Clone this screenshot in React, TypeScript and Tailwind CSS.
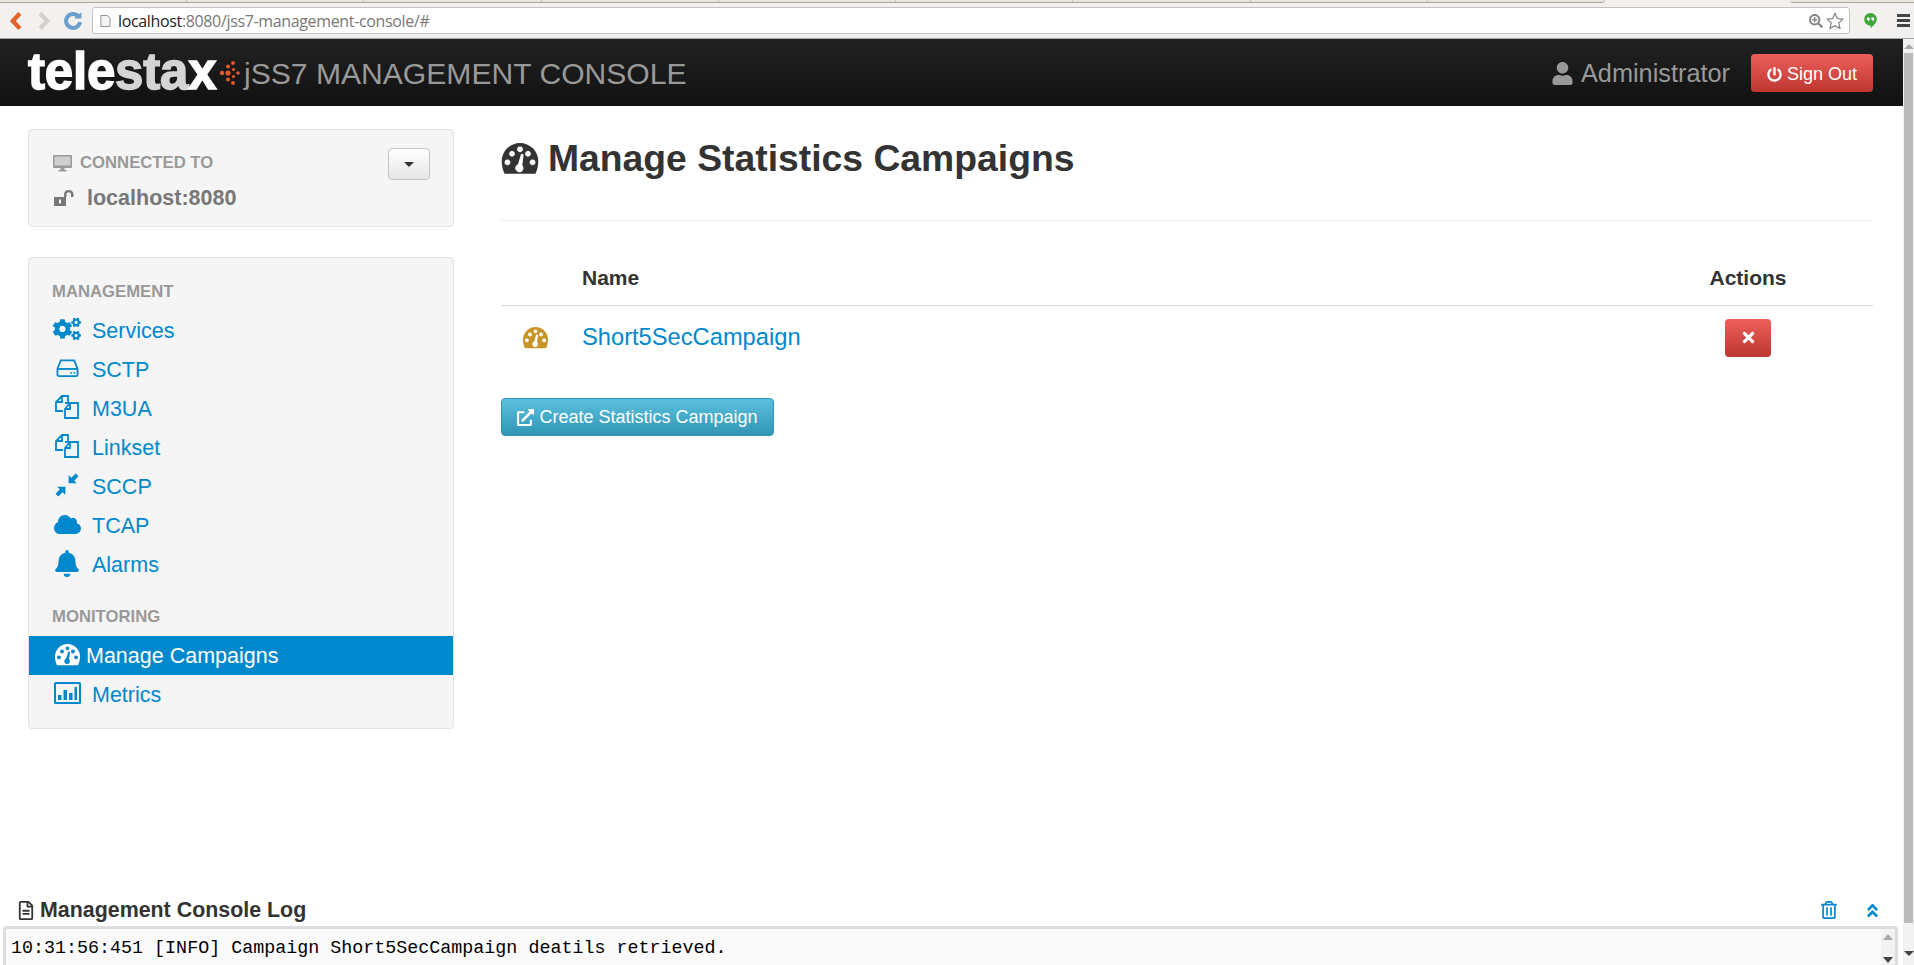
import { FaAngleDoubleUp, FaBell, FaCloud, FaCogs, FaExternalLinkAlt, FaPowerOff, FaRegFileAlt, FaRegTrashAlt, FaSearchPlus, FaTimes, FaUser } from 'react-icons/fa';

const Gauge = ({ className }: { className: string }) => (
  <svg viewBox="0 0 32 28" className={className} fill="currentColor">
    <path
      fillRule="evenodd"
      d="M2.5 27C1 24 0 20 0 16A16 16 0 0 1 32 16C32 20 31 24 29.5 27ZM5 14.5a2.5 2.5 0 1 0 .01 0ZM9 7a2.5 2.5 0 1 0 .01 0ZM16 3a2.5 2.5 0 1 0 .01 0ZM23 7a2.5 2.5 0 1 0 .01 0ZM27 14.5a2.5 2.5 0 1 0 .01 0ZM14.2 18.6L17 9.5L19.2 10L18 19.4A3.6 3.6 0 1 1 14.2 18.6Z"
    />
  </svg>
);

const Copy = () => (
  <svg viewBox="0 0 26 26" className="w-[26px] h-[26px]" fill="none" stroke="currentColor" strokeWidth="1.8">
    <path d="M9 17H2V8L8 2H14V8" />
    <path d="M8 2V8H2" />
    <path d="M11 9H24V24H11V15L16 9Z" fill="#f5f5f5" />
    <path d="M16 9V15H11" />
  </svg>
);

const Hdd = () => (
  <svg viewBox="0 0 24 20" className="w-[23px] h-[20px]" fill="none" stroke="currentColor" strokeWidth="1.9">
    <path d="M1.5 11L5 2H19L22.5 11V17A1.5 1.5 0 0 1 21 18.5H3A1.5 1.5 0 0 1 1.5 17Z" />
    <path d="M1.5 11H22.5" />
    <path d="M15 15H16.5M18.5 15H20" />
  </svg>
);

const Compress = () => (
  <svg viewBox="0 0 22 22" className="w-[24px] h-[24px]" fill="currentColor">
    <path d="M12.5 2V9.5H20L17.6 7L21.5 3L19 .5L15 4.4Z" />
    <path d="M9.5 20V12.5H2L4.4 15L.5 19L3 21.5L7 17.6Z" />
  </svg>
);

const Metrics = () => (
  <svg viewBox="0 0 27 22" className="w-[27px] h-[22px]" fill="currentColor">
    <path
      fillRule="evenodd"
      d="M1.5 0H25.5A1.5 1.5 0 0 1 27 1.5V20.5A1.5 1.5 0 0 1 25.5 22H1.5A1.5 1.5 0 0 1 0 20.5V1.5A1.5 1.5 0 0 1 1.5 0ZM2 2V20H25V2Z"
    />
    <path d="M4 13H7.5V18H4ZM9.5 8H13V18H9.5ZM15 11H18.5V18H15ZM20.5 5H23V18H20.5Z" />
  </svg>
);

const Desktop = () => (
  <svg viewBox="0 0 19 17" className="w-[19px] h-[17px]">
    <path d="M1 0H18A1 1 0 0 1 19 1V12A1 1 0 0 1 18 13H1A1 1 0 0 1 0 12V1A1 1 0 0 1 1 0Z" fill="#999" />
    <path d="M1.5 1.5H17.5V10.5H1.5Z" fill="#cfcfcf" />
    <path d="M7.5 13H11.5V15H13.5V16.5H5.5V15H7.5Z" fill="#999" />
  </svg>
);

const OpenLock = () => (
  <svg viewBox="0 0 21 18" className="w-[21px] h-[18px]" fill="#777">
    <path
      fillRule="evenodd"
      d="M1 8H13V17H1ZM6 10.5V14.5H8V10.5Z"
    />
    <path d="M11 8V5A4.8 4.8 0 0 1 20.5 5V8H18V5A2.3 2.3 0 0 0 13.5 5V8Z" />
  </svg>
);

const LogoDots = () => (
  <svg viewBox="0 0 22 28" className="w-[22px] h-[28px]" fill="#e2592a">
    <circle cx="10" cy="14" r="2.6" />
    <circle cx="4" cy="14" r="2.2" />
    <circle cx="10" cy="7.5" r="2" />
    <circle cx="10" cy="20.5" r="2" />
    <circle cx="15" cy="4" r="1.9" />
    <circle cx="15" cy="24" r="1.9" />
    <circle cx="15.5" cy="10.5" r="1.6" />
    <circle cx="15.5" cy="17.5" r="1.6" />
    <circle cx="20" cy="14" r="1.8" />
  </svg>
);

const management = [
  { label: 'Services', icon: <FaCogs className="w-[28px] h-[28px]" /> },
  { label: 'SCTP', icon: <Hdd /> },
  { label: 'M3UA', icon: <Copy /> },
  { label: 'Linkset', icon: <Copy /> },
  { label: 'SCCP', icon: <Compress /> },
  { label: 'TCAP', icon: <FaCloud className="w-[27px] h-[27px]" /> },
  { label: 'Alarms', icon: <FaBell className="w-[24px] h-[27px]" /> },
];

function NavItem({ label, icon }: { label: string; icon: React.ReactNode }) {
  return (
    <a className="flex items-center h-[39px] pl-[24px] text-[21.5px] text-[#0088cc]">
      <span className="w-[28px] flex justify-center shrink-0 -mt-[3px]">{icon}</span>
      <span className="ml-[11px] pt-[2px]">{label}</span>
    </a>
  );
}

const tabs = [0, 1, 2, 3, 4, 5, 6, 7, 8];

function BrowserBar() {
  return (
    <div className="h-[39px] shrink-0 bg-[#f2f1ef] border-b border-[#a5a5a5] flex flex-col">
      {/* タブの下端 */}
      <div className="h-[3px] flex">
        <div className="w-[1605px] pl-[10px] flex bg-[#e8e6df] border-b border-[#a9a7a0] rounded-br-[3px]">
          {tabs.map((t) => (
            <div key={t} className="w-[178px] border-r border-[#c4c2bb]" />
          ))}
        </div>
        <div className="ml-[185px] flex-1 bg-[#e8e6df] border-b border-[#a9a7a0] rounded-bl-[3px]" />
      </div>
      <div className="flex-1 flex items-center pl-[9px]">
        <svg viewBox="0 0 12 18" className="w-[13px] h-[20px]" fill="none" stroke="#e0642c" strokeWidth="4">
          <path d="M10 2L3.5 9L10 16" />
        </svg>
        <svg viewBox="0 0 12 18" className="w-[13px] h-[20px] ml-[16px]" fill="none" stroke="#d2d0cc" strokeWidth="4">
          <path d="M2 2L8.5 9L2 16" />
        </svg>
        <svg viewBox="0 0 18 18" className="w-[18px] h-[18px] ml-[13px]" fill="none" stroke="#6a9fd0" strokeWidth="4">
          <path d="M14.5 4.5A7 7 0 1 0 16 10" />
          <path d="M11 6H17V1Z" fill="#6a9fd0" strokeWidth="1" />
        </svg>
        <div className="ml-[10px] w-[1758px] h-[27px] bg-white border border-[#c4c3c0] rounded-[3px] flex items-center pl-[7px] pr-[5px] text-[16px] font-['Open_Sans',sans-serif] tracking-[-0.35px]">
          <svg viewBox="0 0 12 14" className="w-[11px] h-[14px]" fill="#f4f4f4" stroke="#8a8a8a" strokeWidth="1">
            <path d="M1 1H8L11 4V13H1Z" />
          </svg>
          <span className="ml-[7px] text-[#222]">localhost</span>
          <span className="text-[#777]">:8080/jss7-management-console/#</span>
          <FaSearchPlus className="ml-auto w-[14px] h-[14px] text-[#888]" />
          <svg viewBox="0 0 20 20" className="w-[18px] h-[18px] ml-[3px]" fill="none" stroke="#777" strokeWidth="1.2">
            <path d="M10 1.5L12.6 7.2L18.8 7.9L14.2 12.1L15.5 18.3L10 15.2L4.5 18.3L5.8 12.1L1.2 7.9L7.4 7.2Z" />
          </svg>
        </div>
        <svg viewBox="0 0 16 20" className="w-[15px] h-[18px] ml-[13px]" fill="#3fa535">
          <path d="M8 1A7 7 0 0 1 15 8C15 12 11 15 8 18V15A7 7 0 0 1 8 1Z" />
          <path d="M4 6H7V9L5.5 11V9H4ZM9 6H12V9L10.5 11V9H9Z" fill="#fff" />
        </svg>
        <div className="ml-[19px] w-[13px] flex flex-col gap-[2px]">
          <div className="h-[3px] bg-[#444]" />
          <div className="h-[3px] bg-[#444]" />
          <div className="h-[3px] bg-[#444]" />
        </div>
      </div>
    </div>
  );
}

export default function App() {
  return (
    <div className="h-[965px] w-[1914px] overflow-hidden flex flex-col bg-white text-[#333] font-['Liberation_Sans',Arial,sans-serif]">
      <BrowserBar />
      <div className="flex flex-1 min-h-0">
        <div className="w-[1903px] flex flex-col min-h-0">
          {/* ヘッダー */}
          <header className="h-[67px] shrink-0 bg-gradient-to-b from-[#222222] to-[#111111] flex items-center pl-[28px] pr-[30px]">
            <span className="text-[51px] leading-none font-bold text-white tracking-[-0.2px] [-webkit-text-stroke:1.5px_#fff] w-[190px] whitespace-nowrap -mt-[3px]">
              tele<span className="text-[#d4d4d4] [-webkit-text-stroke:1.5px_#d4d4d4]">sta</span>x
            </span>
            <LogoDots />
            <span className="ml-[4px] mt-[3px] text-[30.1px] text-[#999] whitespace-nowrap">jSS7 MANAGEMENT CONSOLE</span>
            <FaUser className="ml-auto mt-[2px] w-[21px] h-[23px] text-[#999]" />
            <span className="ml-[8px] mt-[3px] text-[25.3px] text-[#999]">Administrator</span>
            <button className="ml-[21px] w-[122px] h-[38px] pt-[3px] rounded-[4px] bg-gradient-to-b from-[#ee5f5b] to-[#bd362f] text-white text-[18px] flex items-center justify-center gap-[5px]">
              <FaPowerOff className="w-[15px] h-[15px]" />
              Sign Out
            </button>
          </header>

          <div className="flex flex-1 min-h-0">
            {/* サイドバー */}
            <aside className="ml-[28px] w-[426px] shrink-0 pt-[23px]">
              <div className="h-[98px] bg-[#f5f5f5] border border-[#e3e3e3] rounded-[4px] pl-[24px] pr-[23px] flex justify-between">
                <div>
                  <div className="flex items-center h-[20px] mt-[23px] text-[16.7px] font-bold text-[#999]">
                    <Desktop />
                    <span className="ml-[8px]">CONNECTED TO</span>
                  </div>
                  <div className="flex items-center mt-[9px] text-[21.5px] font-bold text-[#777]">
                    <OpenLock />
                    <span className="ml-[13px]">localhost:8080</span>
                  </div>
                </div>
                <button className="mt-[18px] w-[42px] h-[32px] rounded-[4px] border border-[#c4c4c4] bg-gradient-to-b from-[#ffffff] to-[#e6e6e6] flex items-center justify-center">
                  <span className="w-0 h-0 border-x-[5px] border-x-transparent border-t-[5px] border-t-[#333]" />
                </button>
              </div>

              <div className="mt-[30px] h-[472px] bg-[#f5f5f5] border border-[#e3e3e3] rounded-[4px] pt-[24px]">
                <div className="pl-[23px] h-[19px] leading-[19px] text-[16.7px] font-bold text-[#999]">MANAGEMENT</div>
                <div className="mt-[10px]">
                  {management.map((item) => (
                    <NavItem key={item.label} label={item.label} icon={item.icon} />
                  ))}
                </div>
                <div className="pl-[23px] mt-[23px] h-[19px] leading-[19px] text-[16.7px] font-bold text-[#999]">MONITORING</div>
                <a className="mt-[10px] h-[39px] bg-[#0088cc] text-white text-[21.5px] flex items-center pl-[26px]">
                  <Gauge className="w-[25px] h-[22px] -mt-[1px]" />
                  <span className="ml-[6px] pt-[2px]">Manage Campaigns</span>
                </a>
                <NavItem label="Metrics" icon={<Metrics />} />
              </div>
            </aside>

            {/* メイン */}
            <main className="ml-[47px] w-[1372px] pt-[30px]">
              <h1 className="h-[46px] flex items-center text-[37.3px] font-bold text-[#333]">
                <Gauge className="w-[38px] h-[32px]" />
                <span className="ml-[9px]">Manage Statistics Campaigns</span>
              </h1>
              <div className="mt-[38px] h-px bg-[#eeeeee]" />
              <table className="mt-[37px] w-full border-collapse">
                <thead>
                  <tr className="h-[47px] border-b border-[#dddddd] text-[21px] font-bold">
                    <th className="w-[81px]" />
                    <th className="text-left pb-[7px]">Name</th>
                    <th className="w-[250px] pb-[7px]">Actions</th>
                  </tr>
                </thead>
                <tbody>
                  <tr className="h-[65px]">
                    <td>
                      <div className="flex justify-center pr-[13px]">
                        <Gauge className="w-[25px] h-[22px] text-[#c99427]" />
                      </div>
                    </td>
                    <td className="text-[23.7px] text-[#0088cc]">Short5SecCampaign</td>
                    <td>
                      <button className="mx-auto w-[46px] h-[38px] rounded-[4px] bg-gradient-to-b from-[#ee5f5b] to-[#bd362f] text-white flex items-center justify-center">
                        <FaTimes className="w-[15px] h-[17px]" />
                      </button>
                    </td>
                  </tr>
                </tbody>
              </table>
              <button className="mt-[28px] w-[273px] h-[38px] rounded-[4px] bg-gradient-to-b from-[#5bc0de] to-[#2f96b4] border border-[#2f96b4] text-white text-[18px] flex items-center justify-center gap-[5px]">
                <FaExternalLinkAlt className="w-[17px] h-[17px]" />
                Create Statistics Campaign
              </button>
            </main>
          </div>

          {/* ログ */}
          <div className="h-[66px] shrink-0 pl-[3px] pr-[5px]">
            <div className="h-[22px] flex items-center pl-[15px] pr-[17px] text-[21.4px] font-bold">
              <FaRegFileAlt className="w-[16px] h-[19px]" />
              <span className="ml-[6px]">Management Console Log</span>
              <FaRegTrashAlt className="ml-auto w-[16px] h-[18px] text-[#0088cc]" />
              <FaAngleDoubleUp className="ml-[27px] w-[17px] h-[17px] text-[#0088cc]" />
            </div>
            <div className="mt-[5px] h-[42px] border-t-[3px] border-x-[3px] border-[#dddddd] rounded-t-[4px] bg-[#fafafa] flex">
              <pre className="flex-1 pl-[5px] pt-[7px] font-['Liberation_Mono',monospace] text-[18.35px] leading-[26px] text-black">10:31:56:451 [INFO] Campaign Short5SecCampaign deatils retrieved.</pre>
              <div className="w-[14px] bg-[#f2f2f2] flex flex-col items-center justify-between py-[5px]">
                <span className="w-0 h-0 border-x-[5px] border-x-transparent border-b-[6px] border-b-[#aaa]" />
                <span className="w-0 h-0 border-x-[5px] border-x-transparent border-t-[6px] border-t-[#444]" />
              </div>
            </div>
          </div>
        </div>

        {/* スクロールバー */}
        <div className="w-[11px] bg-[#f2f2f2] flex flex-col items-center">
          <span className="mt-[5px] w-0 h-0 border-x-[5px] border-x-transparent border-b-[5px] border-b-[#aaa]" />
          <div className="mt-[4px] w-[9px] h-[870px] bg-[#bbbbbb]" />
          <span className="mt-[28px] w-0 h-0 border-x-[5px] border-x-transparent border-t-[5px] border-t-[#444]" />
        </div>
      </div>
    </div>
  );
}
